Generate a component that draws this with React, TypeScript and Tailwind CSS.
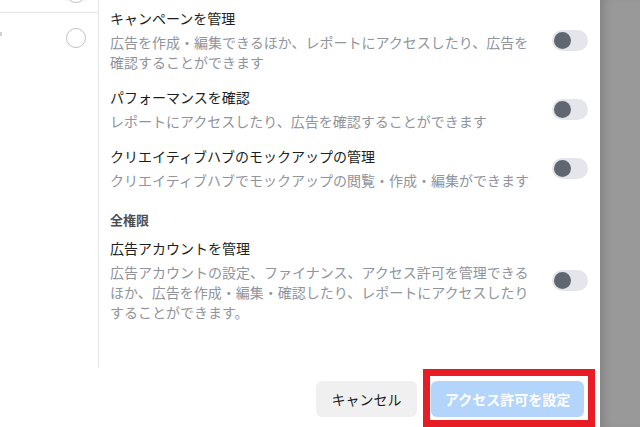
import React from 'react';

interface Permission {
  title: string;
  lines: string[];
}

const partial: Permission[] = [
  {
    title: 'キャンペーンを管理',
    lines: ['広告を作成・編集できるほか、レポートにアクセスしたり、広告を', '確認することができます'],
  },
  {
    title: 'パフォーマンスを確認',
    lines: ['レポートにアクセスしたり、広告を確認することができます'],
  },
  {
    title: 'クリエイティブハブのモックアップの管理',
    lines: ['クリエイティブハブでモックアップの閲覧・作成・編集ができます'],
  },
];

const full: Permission = {
  title: '広告アカウントを管理',
  lines: [
    '広告アカウントの設定、ファイナンス、アクセス許可を管理できる',
    'ほか、広告を作成・編集・確認したり、レポートにアクセスしたり',
    'することができます。',
  ],
};

const Toggle: React.FC = () => (
  <span className="shrink-0 w-[36px] h-[21px] rounded-full bg-[#e4e6eb] flex items-center pl-[2px]">
    <span className="w-[17px] h-[17px] rounded-full bg-[#606770]" />
  </span>
);

const PermissionRow: React.FC<{ item: Permission }> = ({ item }) => (
  <div className="flex items-center gap-4">
    <div className="flex-1">
      <div className="text-[14px] leading-[20px] text-[#1c1e21]">{item.title}</div>
      <div className="mt-[4px] text-[14px] leading-[20px] text-[#90949c]">
        {item.lines.map((l) => (
          <div key={l}>{l}</div>
        ))}
      </div>
    </div>
    <Toggle />
  </div>
);

const App: React.FC = () => {
  return (
    <div
      className="w-[640px] h-[427px] overflow-hidden flex bg-[#999999]"
      style={{ fontFamily: '"Noto Sans CJK JP", "Noto Sans", sans-serif' }}
    >
      <div className="w-[600px] h-full bg-white flex flex-col">
        <div className="flex h-[368px]">
          <div className="w-[99px] shrink-0 border-r border-[#e5e6e8] overflow-hidden">
            <div className="-mt-[26px] h-[39px] border-b border-[#e5e6e8] flex items-center justify-end pr-[12px]">
              <span className="w-[20px] h-[20px] rounded-full border border-[#bec3c9]" />
            </div>
            <div className="h-[50px] flex items-center justify-between pr-[12px]">
              <span className="w-[2px] h-[4px] bg-[#d0d2d6] -mt-[8px]" />
              <span className="w-[20px] h-[20px] rounded-full border border-[#bec3c9]" />
            </div>
          </div>
          <div className="flex-1 pl-[11px] pr-[12px] pt-[8px] flex flex-col">
            <PermissionRow item={partial[0]} />
            <div className="mt-[15px]">
              <PermissionRow item={partial[1]} />
            </div>
            <div className="mt-[15px]">
              <PermissionRow item={partial[2]} />
            </div>
            <div className="mt-[20px] text-[13px] leading-[20px] font-bold text-[#4b4f56]">全権限</div>
            <div className="mt-[8px]">
              <PermissionRow item={full} />
            </div>
          </div>
        </div>
        <div className="flex justify-end items-start gap-[14px] pt-[13px] pr-[16px]">
          <button className="w-[101px] h-[36px] rounded-[6px] bg-[#f0f0f0] text-[14px] text-[#1c1e21]">
            キャンセル
          </button>
          <div className="relative">
            <button className="w-[153px] h-[36px] rounded-[6px] bg-[#b3d4fb] text-[14px] font-bold text-white">
              アクセス許可を設定
            </button>
            <span className="absolute -left-[8px] -top-[12px] -right-[11px] -bottom-[10px] border-[7px] border-[#e81c24]" />
          </div>
        </div>
      </div>
      <div className="flex-1 h-full bg-[#999999] shadow-[inset_8px_0_8px_-4px_rgba(0,0,0,0.15)]" />
    </div>
  );
};

export default App;
